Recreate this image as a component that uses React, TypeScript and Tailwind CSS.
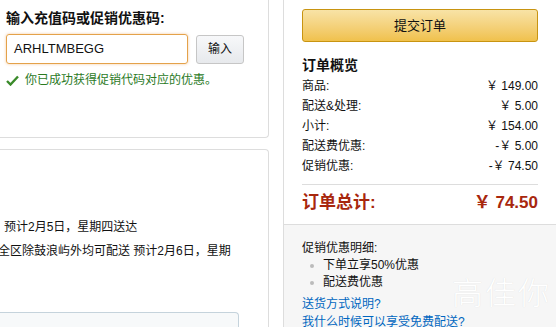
import React from "react";

const font = { fontFamily: '"Liberation Sans", Arial, "Noto Sans CJK SC", sans-serif' };

function Row({ label, value }: { label: string; value: string }) {
  return (
    <div className="flex justify-between h-[20px] items-center text-[12px] text-[#111]">
      <span>{label}</span>
      <span>{value}</span>
    </div>
  );
}

export default function App() {
  return (
    <div className="w-[556px] h-[327px] overflow-hidden bg-white flex relative" style={font}>
      {/* left column */}
      <div className="w-[283px] flex flex-col shrink-0">
        <div className="h-[138px] w-[269px] border-r border-b border-[#ddd] rounded-br-[4px] px-[6px] pt-[9px]">
          <div className="text-[14px] font-bold text-[#111] leading-[18px]">输入充值码或促销优惠码:</div>
          <div className="flex items-center mt-[7px] gap-[8px]">
            <div className="w-[182px] h-[30px] border border-[#e4a24a] rounded-[3px] flex items-center px-[7px] text-[13px] text-[#111] shadow-[0_0_3px_rgba(228,121,17,0.4)]">
              ARHLTMBEGG
            </div>
            <div className="w-[48px] h-[29px] border border-[#c6c6c6] rounded-[3px] bg-gradient-to-b from-[#f7f8fa] to-[#e7e9ec] flex items-center justify-center text-[12px] text-[#111]">
              输入
            </div>
          </div>
          <div className="flex items-center mt-[7px] text-[12px] text-[#2b7a1f] gap-[6px]">
            <svg width="13" height="11" viewBox="0 0 13 11">
              <path d="M1 6 L4.5 9.5 L12 1.5" stroke="#3a8a2a" strokeWidth="2.4" fill="none" />
            </svg>
            <span>你已成功获得促销代码对应的优惠。</span>
          </div>
        </div>
        <div className="mt-[11px] flex-1 w-[269px] border-r border-t border-[#ddd] rounded-tr-[4px] flex flex-col">
          <div className="pt-[65px] text-[12px] text-[#111] leading-[24px] whitespace-nowrap">
            <div className="pl-[4px]">预计2月5日，星期四送达</div>
            <div className="-ml-[2px]">全区除鼓浪屿外均可配送 预计2月6日，星期</div>
          </div>
          <div className="mt-[49px] w-[239px] flex-1 border-t border-r border-[#c5d3dc] rounded-tr-[4px] bg-[#f7f9fa]" />
        </div>
      </div>
      {/* right column */}
      <div className="flex-1 border-l border-[#ddd] flex flex-col">
        <div className="px-[18px] pt-[9px] pb-[10px]">
          <div className="h-[33px] rounded-[3px] border border-[#c89411] bg-gradient-to-b from-[#f8e3a6] to-[#f0c14b] flex items-center justify-center text-[13px] text-[#111]">
            提交订单
          </div>
          <div className="mt-[14px] text-[14px] font-bold text-[#111] leading-[18px]">订单概览</div>
          <div className="mt-[2px]">
            <Row label="商品:" value="￥ 149.00" />
            <Row label="配送&处理:" value="￥ 5.00" />
            <Row label="小计:" value="￥ 154.00" />
            <Row label="配送费优惠:" value="-￥ 5.00" />
            <Row label="促销优惠:" value="-￥ 74.50" />
          </div>
          <div className="mt-[8px] border-t border-[#ddd]" />
          <div className="flex justify-between items-center mt-[7px] text-[17px] font-bold text-[#a8270d] h-[22px]">
            <span>订单总计:</span>
            <span>￥ 74.50</span>
          </div>
        </div>
        <div className="flex-1 bg-[#f6f6f6] border-t border-[#ddd] px-[18px] pt-[15px] text-[12px] text-[#111] relative">
          <div className="leading-[17px]">促销优惠明细:</div>
          <div className="leading-[17px] pl-[8px] flex items-center gap-[9px]">
            <span className="w-[4px] h-[4px] rounded-full bg-[#bbb]" />下单立享50%优惠
          </div>
          <div className="leading-[17px] pl-[8px] flex items-center gap-[9px]">
            <span className="w-[4px] h-[4px] rounded-full bg-[#bbb]" />配送费优惠
          </div>
          <div className="leading-[22px] text-[#0066c0] mt-[2px]">送货方式说明?</div>
          <div className="leading-[14px] text-[#0066c0]">我什么时候可以享受免费配送?</div>
          <div className="absolute left-[168px] top-[50px] text-[31px] leading-none text-white tracking-[2px] [text-shadow:0_0_1px_rgba(0,0,0,0.12)]" style={{ fontFamily: '"Noto Sans CJK SC", sans-serif', fontWeight: 300 }}>
            高佳你
          </div>
        </div>
      </div>
    </div>
  );
}
